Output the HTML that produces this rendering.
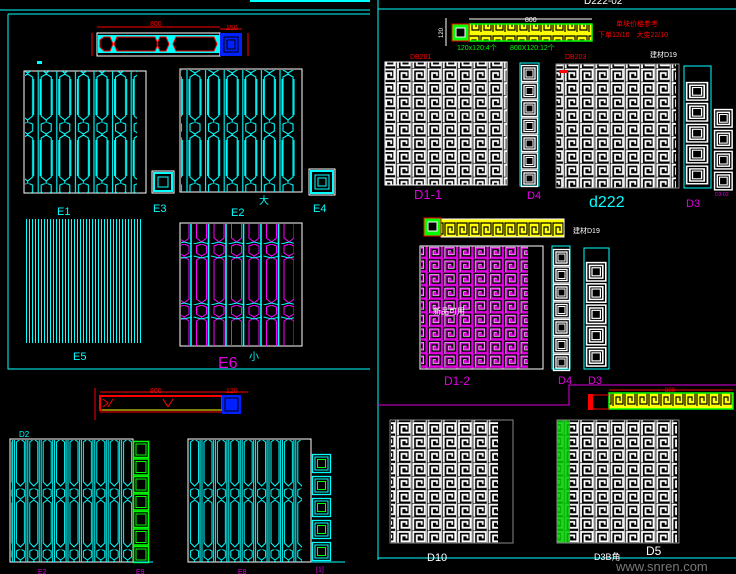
<!DOCTYPE html>
<html><head><meta charset="utf-8"><style>
html,body{margin:0;padding:0;background:#000;width:736px;height:574px;overflow:hidden}
svg{display:block}
text{font-family:"Liberation Sans","Noto Sans CJK SC",sans-serif}
</style></head><body>
<svg width="736" height="574" viewBox="0 0 736 574" xmlns="http://www.w3.org/2000/svg">
<defs>
<pattern id="fret" width="15.25" height="13.6" patternUnits="userSpaceOnUse">
<path d="M1.5 13.6 V1.5 H13 V11 H5 V5 H10 V8" fill="none" stroke="#fff" stroke-width="1.8"/>
<path d="M14.5 0 V13.6" stroke="#fff" stroke-width="1"/>
</pattern>
<pattern id="fretM" width="15.25" height="13.6" patternUnits="userSpaceOnUse">
<rect width="15.25" height="13.6" fill="#e000e0"/>
<path d="M1.5 13.6 V1.5 H13 V11 H5 V5 H10 V8" fill="none" stroke="#000" stroke-width="1.5"/>
<path d="M2.5 13.6 V2.5 H12 V10 H6 V6 H9" fill="none" stroke="#fff" stroke-width="0.6"/>
</pattern>
<pattern id="fretY" width="12" height="17" patternUnits="userSpaceOnUse">
<rect width="12" height="17" fill="#ffff00"/>
<path d="M1 15 V2 H11 V13 H4 V6 H8 V10" fill="none" stroke="#000" stroke-width="1.2"/>
</pattern>
<pattern id="lat" width="18.6" height="61" patternUnits="userSpaceOnUse">
<path d="M4 2 L9 0 L14 2 V9 L9 12 L4 9 Z M4 16 L9 13 L14 16 V55 L9 59 L4 55 Z" fill="none" stroke="#00ffff" stroke-width="1.1"/>
<path d="M3 18 V54 M15 18 V54 M9 12 V14 M9 59 V61 M1 0 V61" fill="none" stroke="#00ffff" stroke-width="1.1"/>
</pattern>
<pattern id="latM" width="17.5" height="61" patternUnits="userSpaceOnUse">
<path d="M4 2 L9 0 L14 2 V9 L9 12 L4 9 Z M4 16 L9 13 L14 16 V55 L9 59 L4 55 Z" fill="none" stroke="#ff00ff" stroke-width="1"/>
<path d="M16 0 V61" stroke="#00ffff" stroke-width="1.6"/>
<path d="M1 12 L9 14 L17 12 M1 61 L9 59 L17 61" stroke="#00ffff" stroke-width="1" fill="none"/>
</pattern>
<pattern id="latC" width="13.4" height="61" patternUnits="userSpaceOnUse">
<path d="M3 2 L7 0 L11 2 V8 L7 11 L3 8 Z M3 15 L7 12 L11 15 V55 L7 59 L3 55 Z" fill="none" stroke="#00ffff" stroke-width="1"/>
<path d="M1 0 V61 M12.5 0 V61" stroke="#00ffff" stroke-width="1"/>
</pattern>
<pattern id="lines" x="26" y="0" width="3" height="10" patternUnits="userSpaceOnUse">
<rect x="0" y="0" width="1" height="10" fill="#00ffff" shape-rendering="crispEdges"/>
</pattern>
<g id="sqW"><rect x="0.5" y="0.5" width="16" height="16" fill="none" stroke="#fff" stroke-width="1.3"/><rect x="3" y="3" width="11" height="11" fill="none" stroke="#fff" stroke-width="1.3"/><rect x="5" y="5" width="7" height="7" fill="#000" stroke="#fff"/></g>
<g id="sqC"><rect x="0.5" y="0.5" width="18" height="18" fill="none" stroke="#00ffff" stroke-width="1.3"/><rect x="3" y="3" width="13" height="13" fill="none" stroke="#00ffff"/><rect x="5.5" y="5.5" width="8" height="8" fill="none" stroke="#00ff00"/></g>
<g id="sqG"><rect x="0.5" y="0.5" width="15" height="16" fill="none" stroke="#00ff00" stroke-width="1.5"/><rect x="3" y="3" width="10" height="11" fill="none" stroke="#00ff00"/></g>
</defs>

<path d="M0 10 H370 M8 14 H370 M8 14 V369 H370" stroke="#00ffff" fill="none" stroke-width="1"/>
<path d="M378 0 V560 M378 9 H736 M378 558 H736" stroke="#00ffff" fill="none" stroke-width="1"/>
<path d="M378 405 H569 V385 H736" stroke="#e000e0" fill="none" stroke-width="1"/>
<rect x="250" y="0" width="120" height="2" fill="#00ffff"/>

<rect x="97" y="33" width="123" height="23" fill="none" stroke="#fff"/>
<rect x="98" y="35" width="122" height="18" fill="#00ffff"/>
<path d="M100 40 L104 37 H110 L113 44 L110 51 H104 L100 47Z M117 37 H155 L158 44 L155 51 H117 L114 44Z M160 37 H166 L169 44 L166 51 H160 L157 44Z M176 37 H214 L217 44 L214 51 H176 L173 44Z" fill="#000" stroke="#f00"/>
<rect x="220" y="33" width="22" height="23" fill="#0020ff"/><rect x="224" y="37" width="14" height="15" fill="none" stroke="#000"/><rect x="227" y="40" width="8" height="9" fill="none" stroke="#000"/>
<path d="M97 27 H220 M220 29 H242 M92 33 V56 M248 33 V56" stroke="#f00"/>
<text x="150" y="26" fill="#f00" font-size="7">800</text><text x="226" y="30" fill="#f00" font-size="7">150</text>
<rect x="37" y="61" width="5" height="3" fill="#00ffff"/>

<rect x="24" y="71" width="122" height="122" fill="none" stroke="#fff"/>
<rect x="25" y="71" width="112" height="122" fill="url(#lat)"/>
<rect x="152" y="171" width="22" height="22" fill="none" stroke="#fff"/><rect x="154" y="173" width="18" height="18" fill="none" stroke="#00ffff" stroke-width="2"/><rect x="158" y="177" width="10" height="10" fill="none" stroke="#00ffff"/>
<rect x="180" y="69" width="122" height="123" fill="none" stroke="#fff"/>
<rect x="181" y="70" width="115" height="122" fill="url(#lat)"/>
<rect x="309" y="169" width="26" height="26" fill="none" stroke="#fff"/><rect x="311" y="171" width="22" height="22" fill="none" stroke="#00ffff" stroke-width="2"/><rect x="315" y="175" width="14" height="14" fill="none" stroke="#00ffff"/><rect x="318" y="178" width="8" height="8" fill="none" stroke="#00ffff"/>
<g fill="#00ffff" font-size="11"><text x="57" y="215">E1</text><text x="153" y="212">E3</text><text x="231" y="216">E2</text><text x="313" y="212">E4</text><text x="259" y="204" font-size="10">大</text>
<text x="73" y="360">E5</text><text x="249" y="360" font-size="10">小</text></g>
<rect x="26" y="219" width="117" height="124" fill="url(#lines)"/>
<path d="M26 219.5 H143 M26 342.5 H143" stroke="#00ffff" stroke-dasharray="1 2"/>
<rect x="180" y="223" width="122" height="123" fill="none" stroke="#fff"/>
<rect x="181" y="224" width="113" height="122" fill="url(#latM)"/>
<text x="218" y="368" fill="#e000e0" font-size="16">E6</text>

<path d="M100 392 H248 M100 412 H222 M95 388 V420" stroke="#f00"/>
<rect x="100" y="396" width="122" height="14" fill="none" stroke="#f00" stroke-width="2"/>
<path d="M102 410 H222" stroke="#00ff00"/>
<path d="M103 399 L108 403 L103 407 M113 399 L108 407 M163 399 L168 407 M173 399 L168 407" stroke="#f00" fill="none"/>
<rect x="222" y="395" width="19" height="19" fill="#0020ff"/><rect x="225" y="398" width="13" height="13" fill="none" stroke="#000"/>
<text x="150" y="393" fill="#f00" font-size="7">800</text><text x="226" y="393" fill="#f00" font-size="7">120</text>
<text x="19" y="437" fill="#00ffff" font-size="8">D2</text>
<rect x="10" y="439" width="123" height="123" fill="none" stroke="#fff"/>
<rect x="11" y="440" width="121" height="122" fill="url(#latC)"/>
<g transform="translate(133,441)"><use href="#sqG"/><use href="#sqG" y="17.5"/><use href="#sqG" y="35"/><use href="#sqG" y="52.5"/><use href="#sqG" y="70"/><use href="#sqG" y="87.5"/><use href="#sqG" y="105"/></g>
<path d="M133 562 H153" stroke="#00ffff"/>
<rect x="188" y="439" width="123" height="123" fill="none" stroke="#fff"/>
<rect x="189" y="440" width="113" height="122" fill="url(#latC)"/>
<g transform="translate(312,454)"><use href="#sqC"/><use href="#sqC" y="22"/><use href="#sqC" y="44"/><use href="#sqC" y="66"/><use href="#sqC" y="88"/></g>
<path d="M311 562 H345" stroke="#00ffff"/>
<g fill="#e000e0" font-size="7"><text x="38" y="574">E2</text><text x="136" y="574">E9</text><text x="238" y="574">E8</text><text x="316" y="572">[1]</text></g>

<text x="584" y="4" fill="#fff" font-size="10">D222-02</text>
<rect x="469" y="24" width="123" height="17" fill="url(#fretY)" stroke="#00ff00" stroke-width="1.5"/>
<path d="M469 19 H592" stroke="#fff"/><text x="525" y="22" fill="#fff" font-size="7">800</text>
<rect x="452" y="24" width="17" height="17" fill="#00ff00" stroke="#f00"/><rect x="456" y="28" width="9" height="9" fill="#000" stroke="#fff"/>
<path d="M446 18 V46" stroke="#fff"/><text x="443" y="38" fill="#fff" font-size="6" transform="rotate(-90 443 38)">120</text>
<text x="457" y="50" fill="#00ff00" font-size="7">120x120:4个</text><text x="510" y="50" fill="#00ff00" font-size="7">800X120:12个</text>
<text x="616" y="26" fill="#f00" font-size="7">单块价格参考</text><text x="598" y="37" fill="#f00" font-size="7">下单12/10　大变22/10</text>
<text x="410" y="59" fill="#f00" font-size="7">DB201</text><text x="565" y="59" fill="#f00" font-size="7">DB203</text><text x="650" y="57" fill="#fff" font-size="7">建材D19</text>
<rect x="385" y="62" width="122" height="123" fill="url(#fret)"/><rect x="385" y="62" width="122" height="123" fill="none" stroke="#fff"/>
<text x="414" y="199" fill="#e000e0" font-size="13">D1-1</text>
<rect x="520" y="63" width="19" height="123" fill="none" stroke="#00ffff"/>
<g transform="translate(521,65)"><use href="#sqW"/><use href="#sqW" y="17.5"/><use href="#sqW" y="35"/><use href="#sqW" y="52.5"/><use href="#sqW" y="70"/><use href="#sqW" y="87.5"/><use href="#sqW" y="105"/></g>
<text x="527" y="199" fill="#e000e0" font-size="11">D4</text>
<rect x="556" y="64" width="120" height="124" fill="url(#fret)"/><rect x="556" y="64" width="123" height="124" fill="none" stroke="#888"/>
<rect x="559" y="70" width="9" height="3" fill="#f00"/>
<text x="589" y="207" fill="#00ffff" font-size="16">d222</text>
<rect x="684" y="66" width="27" height="122" fill="none" stroke="#00ffff"/>
<g transform="translate(686,82) scale(1.3 1.1)"><use href="#sqW"/><use href="#sqW" y="19"/><use href="#sqW" y="38"/><use href="#sqW" y="57"/><use href="#sqW" y="76"/></g>
<text x="686" y="207" fill="#e000e0" font-size="11">D3</text>
<g transform="translate(714,109) scale(1.1 1.1)"><use href="#sqW"/><use href="#sqW" y="19"/><use href="#sqW" y="38"/><use href="#sqW" y="57"/></g>
<text x="715" y="196" fill="#e000e0" font-size="5">D3-02</text>
<rect x="441" y="219" width="123" height="18" fill="url(#fretY)" stroke="#fff"/>
<rect x="424" y="218" width="17" height="18" fill="#00ff00" stroke="#f00"/><rect x="428" y="222" width="9" height="9" fill="#000" stroke="#fff"/>
<text x="573" y="233" fill="#fff" font-size="7">建材D19</text>
<rect x="421" y="246" width="107" height="123" fill="url(#fretM)"/><rect x="420" y="246" width="123" height="123" fill="none" stroke="#fff"/>
<text x="433" y="314" fill="#fff" font-size="8">新品可用</text>
<text x="444" y="385" fill="#e000e0" font-size="12">D1-2</text>
<rect x="552" y="246" width="18" height="123" fill="none" stroke="#00ffff"/>
<g transform="translate(553,249)"><use href="#sqW"/><use href="#sqW" y="17.5"/><use href="#sqW" y="35"/><use href="#sqW" y="52.5"/><use href="#sqW" y="70"/><use href="#sqW" y="87.5"/><use href="#sqW" y="105"/></g>
<rect x="584" y="248" width="25" height="121" fill="none" stroke="#00ffff"/>
<g transform="translate(586,262) scale(1.2 1.15)"><use href="#sqW"/><use href="#sqW" y="18.5"/><use href="#sqW" y="37"/><use href="#sqW" y="55.5"/><use href="#sqW" y="74"/></g>
<text x="558" y="384" fill="#e000e0" font-size="11">D4</text><text x="588" y="384" fill="#e000e0" font-size="11">D3</text>
<rect x="609" y="393" width="124" height="16" fill="url(#fretY)" stroke="#00ff00" stroke-width="1.5"/>
<path d="M609 390 H733 M590 395 H609 M590 409 H609" stroke="#f00"/><rect x="588" y="394" width="5" height="16" fill="#f00"/>
<text x="665" y="392" fill="#f00" font-size="6">800</text>
<rect x="391" y="420" width="107" height="123" fill="url(#fret)"/><rect x="390" y="420" width="123" height="123" fill="none" stroke="#888"/>
<text x="427" y="561" fill="#fff" font-size="11">D10</text>
<rect x="557" y="420" width="120" height="123" fill="url(#fret)"/><rect x="557" y="420" width="13" height="123" fill="#00cc00" opacity="0.85"/>
<rect x="557" y="420" width="122" height="123" fill="none" stroke="#888"/>
<text x="594" y="560" fill="#fff" font-size="9">D3B角</text><text x="646" y="555" fill="#fff" font-size="12">D5</text>
<text x="616" y="571" fill="#777" font-size="13" font-family="Liberation Serif, serif">www.snren.com</text>
</svg>
</body></html>
